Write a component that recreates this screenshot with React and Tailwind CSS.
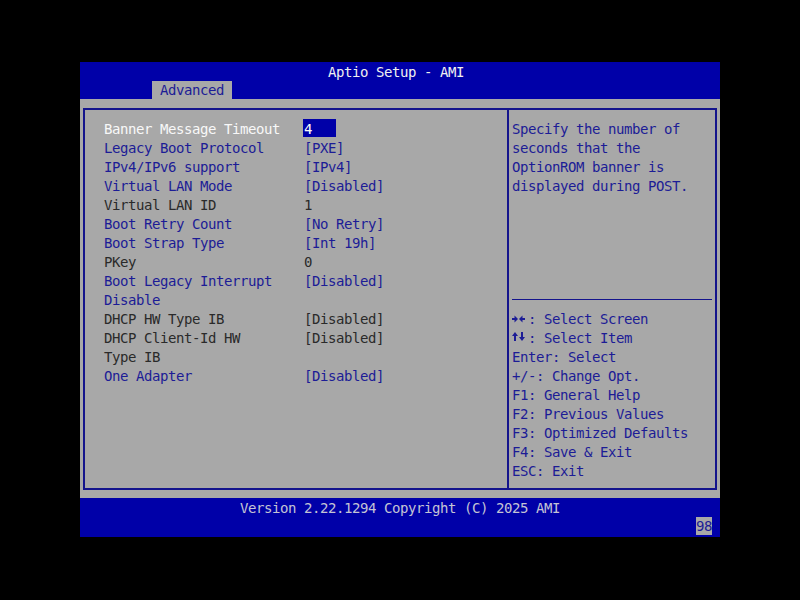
import React from "react";

const BLUE = "text-[#1c1c96]";
const DARK = "text-[#2a2a2a]";
const WHITE = "text-[#f8f8f8]";

const rows = [
  { label: "Banner Message Timeout", value: "4", kind: "sel" },
  { label: "Legacy Boot Protocol", value: "[PXE]", kind: "blue" },
  { label: "IPv4/IPv6 support", value: "[IPv4]", kind: "blue" },
  { label: "Virtual LAN Mode", value: "[Disabled]", kind: "blue" },
  { label: "Virtual LAN ID", value: "1", kind: "dark" },
  { label: "Boot Retry Count", value: "[No Retry]", kind: "blue" },
  { label: "Boot Strap Type", value: "[Int 19h]", kind: "blue" },
  { label: "PKey", value: "0", kind: "dark" },
  { label: "Boot Legacy Interrupt", value: "[Disabled]", kind: "blue" },
  { label: "Disable", value: "", kind: "blue" },
  { label: "DHCP HW Type IB", value: "[Disabled]", kind: "dark" },
  { label: "DHCP Client-Id HW", value: "[Disabled]", kind: "dark" },
  { label: "Type IB", value: "", kind: "dark" },
  { label: "One Adapter", value: "[Disabled]", kind: "blue" },
];

const help = [
  "Specify the number of",
  "seconds that the",
  "OptionROM banner is",
  "displayed during POST.",
];

const keys = [
  "Enter: Select",
  "+/-: Change Opt.",
  "F1: General Help",
  "F2: Previous Values",
  "F3: Optimized Defaults",
  "F4: Save & Exit",
  "ESC: Exit",
];

function LeftRight() {
  return (
    <svg width="16" height="19" viewBox="0 0 16 19" className="shrink-0 block">
      <rect x="0" y="9" width="4" height="2" fill="currentColor" />
      <polygon points="2.5,6.5 6,10 2.5,13.5" fill="currentColor" />
      <rect x="9" y="9" width="4" height="2" fill="currentColor" />
      <polygon points="10.5,6.5 7,10 10.5,13.5" fill="currentColor" />
    </svg>
  );
}

function UpDown() {
  return (
    <svg width="16" height="19" viewBox="0 0 16 19" className="shrink-0 block">
      <rect x="2" y="6" width="2" height="7" fill="currentColor" />
      <polygon points="0,8 3,4 6,8" fill="currentColor" />
      <rect x="9" y="4" width="2" height="7" fill="currentColor" />
      <polygon points="7,9 10,13 13,9" fill="currentColor" />
    </svg>
  );
}

function Row({ r }) {
  if (r.kind === "sel") {
    return (
      <div className="flex h-[19px] leading-[20px]">
        <div className={`w-[200px] whitespace-pre ${WHITE}`}>{r.label}</div>
        <div className={`-ml-[1px] w-[33px] h-[18px] pl-[1px] bg-[#0000a8] ${WHITE}`}>{r.value}</div>
      </div>
    );
  }
  const c = r.kind === "blue" ? BLUE : DARK;
  return (
    <div className={`flex h-[19px] leading-[20px] ${c}`}>
      <div className="w-[200px] whitespace-pre">{r.label}</div>
      <div className="whitespace-pre">{r.value}</div>
    </div>
  );
}

export default function App() {
  return (
    <div className="w-[800px] h-[600px] bg-black pt-[62px] pl-[80px] font-['DejaVu_Sans_Mono',monospace] text-[14px] tracking-[-0.43px]">
      <div className="w-[640px] h-[475px] flex flex-col">
        <header className="h-[37px] bg-[#0000a8] flex flex-col">
          <div className="h-[19px] leading-[20px] text-center text-[#f0f0f0] pr-[8px] whitespace-pre">
            Aptio Setup - AMI
          </div>
          <div className="h-[18px] pl-[72px]">
            <div className={`w-[80px] h-[18px] bg-[#a8a8a8] leading-[19px] pl-[8px] ${BLUE}`}>Advanced</div>
          </div>
        </header>
        <main className="h-[399px] bg-[#a8a8a8] pt-[9px] px-[3px] pb-[8px]">
          <div className="h-full border-2 border-[#14148c] flex">
            <div className="w-[422px] pl-[19px] pt-[9px] flex flex-col">
              {rows.map((r, i) => (
                <Row key={i} r={r} />
              ))}
            </div>
            <div className="w-[2px] bg-[#14148c]" />
            <div className="flex-1 flex flex-col">
              <div className="h-[189px] pt-[9px] pl-[3px] flex flex-col">
                {help.map((t, i) => (
                  <div key={i} className={`h-[19px] leading-[20px] whitespace-pre ${BLUE}`}>{t}</div>
                ))}
              </div>
              <div className="h-[1px] mx-[3px] bg-[#14148c]" />
              <div className={`pt-[9px] pl-[3px] flex flex-col ${BLUE}`}>
                <div className="flex h-[19px] leading-[20px] whitespace-pre">
                  <LeftRight />
                  <span>: Select Screen</span>
                </div>
                <div className="flex h-[19px] leading-[20px] whitespace-pre">
                  <UpDown />
                  <span>: Select Item</span>
                </div>
                {keys.map((t, i) => (
                  <div key={i} className="h-[19px] leading-[20px] whitespace-pre">{t}</div>
                ))}
              </div>
            </div>
          </div>
        </main>
        <footer className="h-[39px] bg-[#0000a8] flex flex-col">
          <div className="h-[19px] leading-[21px] text-center text-[#c4c4d4] whitespace-pre">
            Version 2.22.1294 Copyright (C) 2025 AMI
          </div>
          <div className="h-[18px] flex justify-end pr-[8px]">
            <div className={`w-[16px] h-[18px] bg-[#a8a8a8] leading-[19px] ${BLUE}`}>98</div>
          </div>
        </footer>
      </div>
    </div>
  );
}
